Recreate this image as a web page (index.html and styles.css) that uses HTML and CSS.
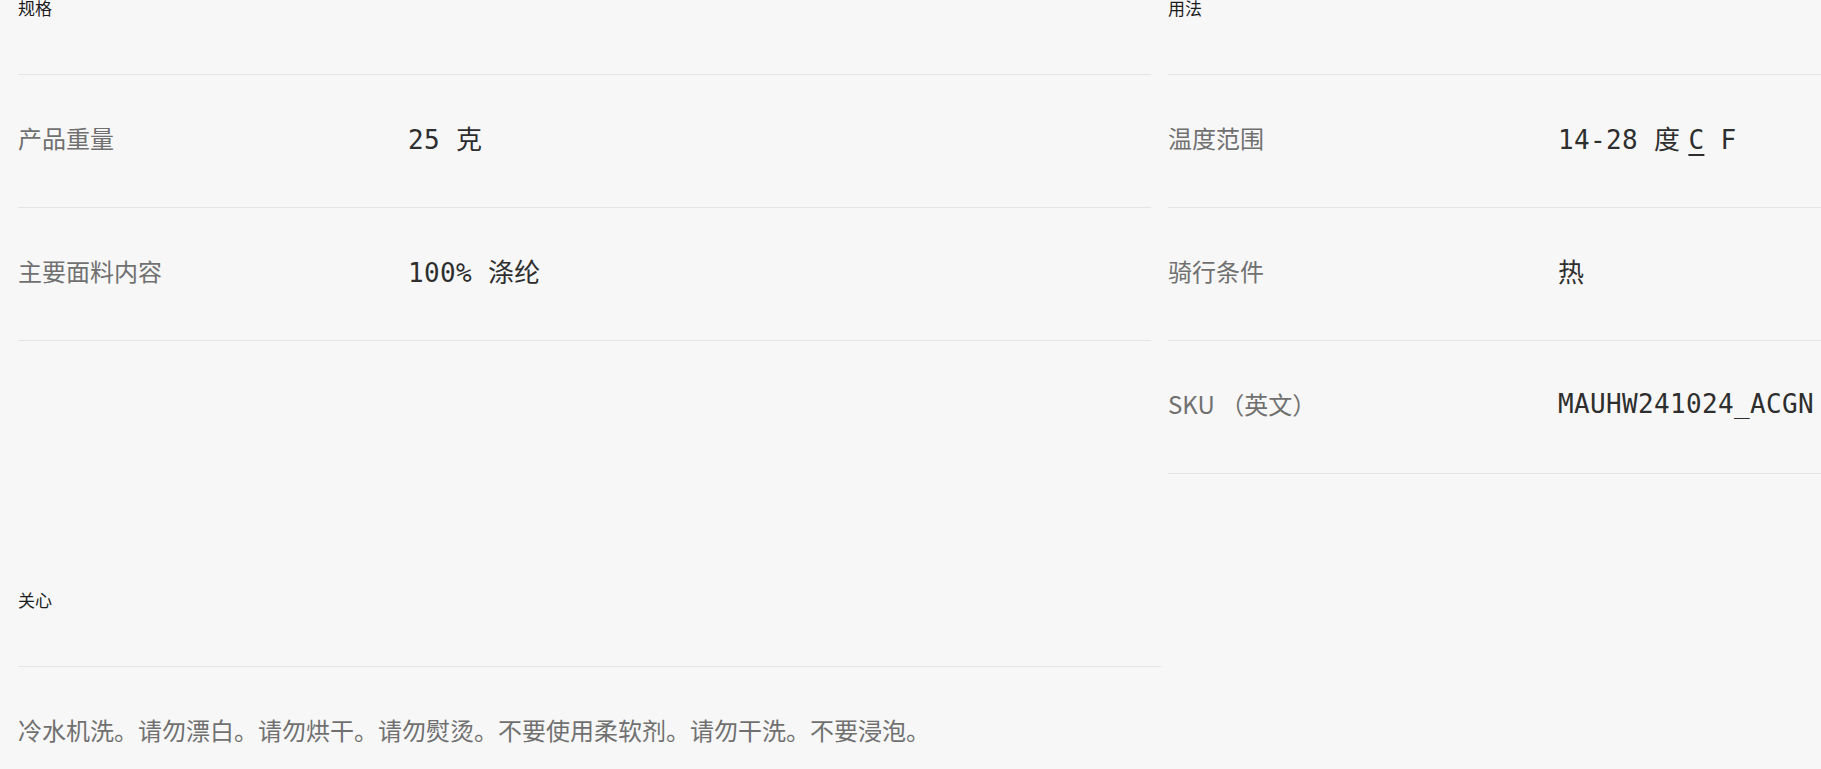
FILE: index.html
```html
<!DOCTYPE html>
<html lang="zh-CN">
<head>
  <meta charset="UTF-8">
  <meta name="viewport" content="width=device-width, initial-scale=1.0">
  <title>产品详情</title>
  <link rel="stylesheet" href="styles.css">
</head>
<body>
  <div class="specs">
    <section class="block">
      <div class="block-head"><h2>规格</h2></div>
      <div class="row">
        <span class="label">产品重量</span>
        <span class="value">25 克</span>
      </div>
      <div class="row">
        <span class="label">主要面料内容</span>
        <span class="value">100% 涤纶</span>
      </div>
    </section>

    <section class="block">
      <div class="block-head"><h2>用法</h2></div>
      <div class="row">
        <span class="label">温度范围</span>
        <span class="value">14-28 度<span class="units"><span class="unit on">C</span> <span class="unit">F</span></span></span>
      </div>
      <div class="row">
        <span class="label">骑行条件</span>
        <span class="value">热</span>
      </div>
      <div class="row">
        <span class="label">SKU （英文）</span>
        <span class="value">MAUHW241024_ACGN</span>
      </div>
    </section>
  </div>

  <section class="block care">
    <div class="block-head"><h2>关心</h2></div>
    <div class="row care-row">
      <p class="care-text">冷水机洗。请勿漂白。请勿烘干。请勿熨烫。不要使用柔软剂。请勿干洗。不要浸泡。</p>
    </div>
  </section>
</body>
</html>
```

FILE: styles.css
```css
html, body {
  overflow: hidden;
}
body {
  font-family: "Noto Sans CJK SC", "Noto Sans", sans-serif;
  margin: 0;
  padding: 0 0 0 18px;
  background-color: #f7f7f7;
  color: #1c1c1c;
}
.specs {
  display: grid;
  grid-template-columns: 1133px 1133px;
  column-gap: 17px;
  align-items: start;
}
.block-head {
  height: 74px;
  border-bottom: 1px solid #e4e4e4;
}
.block-head h2 {
  margin: 0;
  font-size: 17px;
  font-weight: 400;
  line-height: 15px;
  color: #1c1c1c;
}
.row {
  display: grid;
  grid-template-columns: 390px 1fr;
  align-items: center;
  box-sizing: border-box;
  height: 133px;
  padding-bottom: 7px;
  border-bottom: 1px solid #e4e4e4;
}
.label {
  font-size: 24px;
  color: #707070;
  white-space: nowrap;
}
.value {
  font-family: "DejaVu Sans Mono", "Noto Sans CJK SC", monospace;
  font-size: 26px;
  letter-spacing: 0.35px;
  color: #2e2e2e;
  white-space: nowrap;
}
.units {
  margin-left: 8px;
}
.unit.on {
  text-decoration: underline;
  text-decoration-thickness: 2px;
  text-underline-offset: 5px;
}
.care {
  width: 1143px;
  margin-top: 118px;
}
.care-row {
  display: flex;
}
.care-text {
  margin: 0;
  font-size: 24px;
  color: #707070;
}
```
